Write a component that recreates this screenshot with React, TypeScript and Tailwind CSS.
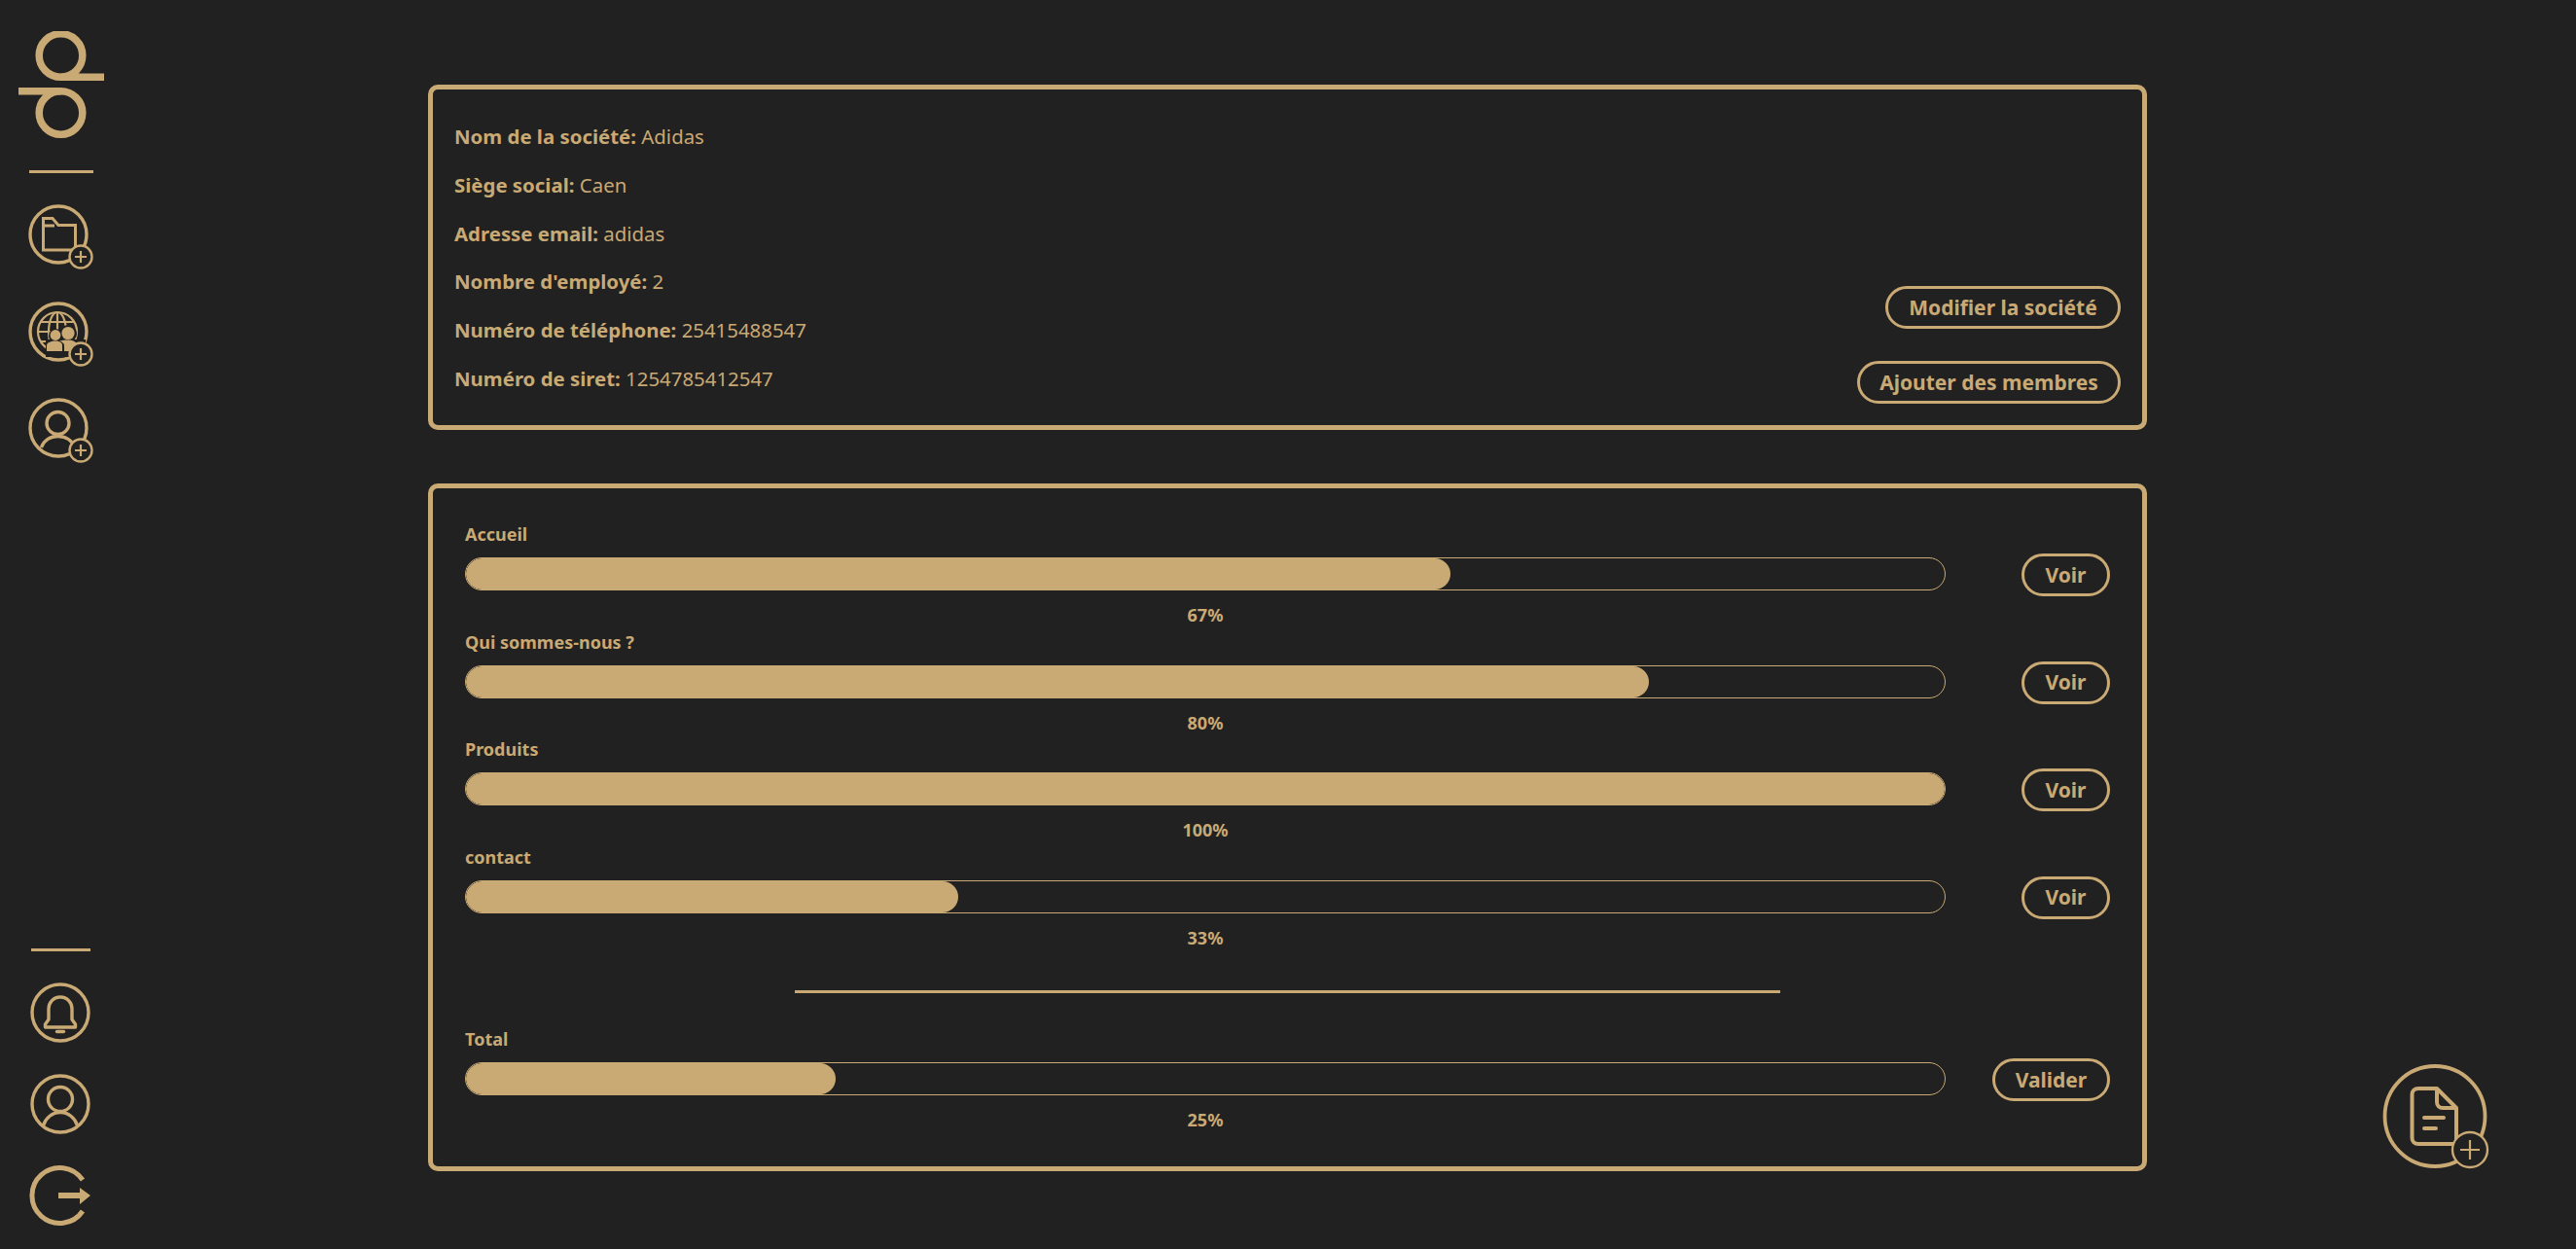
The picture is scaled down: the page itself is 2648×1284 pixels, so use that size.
const gold = '#c9a974'

function Badge({ cx = 55, cy = 55, r = 11.5, arm = 6 }: { cx?: number; cy?: number; r?: number; arm?: number }) {
  return (
    <g>
      <circle cx={cx} cy={cy} r={r} fill="#212121" stroke={gold} strokeWidth="2.4" />
      <path d={`M${cx - arm} ${cy}H${cx + arm}M${cx} ${cy - arm}V${cy + arm}`} stroke={gold} strokeWidth="2.2" />
    </g>
  )
}

function Logo() {
  return (
    <svg width="90" height="112" viewBox="0 0 90 112" fill="none" stroke={gold} strokeWidth="7.5">
      <circle cx="43.5" cy="25" r="22.3" />
      <path d="M43.5 47.3H88" />
      <circle cx="43.5" cy="84" r="22.3" />
      <path d="M0 61.7H43.5" />
    </svg>
  )
}

function FolderIcon() {
  return (
    <svg width="68" height="68" viewBox="0 0 68 68" fill="none" stroke={gold} strokeWidth="3">
      <circle cx="32" cy="32" r="29" strokeWidth="3.4" />
      <path d="M16.5 48V15.5H26L32 22.5H49.5V48Z" />
      <path d="M16.5 23H28" />
      <Badge />
    </svg>
  )
}

function GlobeIcon() {
  return (
    <svg width="68" height="68" viewBox="0 0 68 68" fill="none" stroke={gold} strokeWidth="2.2">
      <circle cx="32" cy="32" r="29" strokeWidth="3.4" />
      <circle cx="31" cy="32" r="20" />
      <ellipse cx="31" cy="32" rx="9" ry="20" />
      <path d="M31 12V52M13 22H49M11 32H51M13 42H49" />
      <g fill="#212121" stroke="none">
        <circle cx="29" cy="36" r="7" />
        <circle cx="42" cy="34" r="9" />
        <path d="M19 40H60V58H19Z" />
      </g>
      <g fill={gold} stroke="none">
        <circle cx="29" cy="35.5" r="5.4" />
        <circle cx="42" cy="33.5" r="6.6" />
        <path d="M20 52V46C20 43 25 41.5 29 41.5C33 41.5 36 43 36 46V52Z" />
        <path d="M33 41.5C35.5 41 38 40.5 42 40.5C47 40.5 50 42 51 45V52H38V46C38 44 36 42.5 33 41.5Z" />
      </g>
      <Badge />
    </svg>
  )
}

function UserPlusIcon() {
  return (
    <svg width="68" height="68" viewBox="0 0 68 68" fill="none" stroke={gold} strokeWidth="3.4">
      <circle cx="32" cy="32" r="29" />
      <circle cx="31.5" cy="27" r="11.5" />
      <path d="M14.5 52C17 44.5 24 40.5 31.5 40.5C39 40.5 46 44.5 49 52" />
      <Badge />
    </svg>
  )
}

function BellIcon() {
  return (
    <svg width="64" height="64" viewBox="0 0 64 64" fill="none" stroke={gold} strokeWidth="3.4">
      <circle cx="32" cy="32" r="29" />
      <path d="M32 16C25 16 20 21.5 20 28V39L16.5 44V47H47.5V44L44 39V28C44 21.5 39 16 32 16Z" strokeLinejoin="round" />
      <path d="M28.5 51.5H35.5" strokeLinecap="round" />
    </svg>
  )
}

function UserIcon() {
  return (
    <svg width="64" height="64" viewBox="0 0 64 64" fill="none" stroke={gold} strokeWidth="3.4">
      <circle cx="32" cy="32" r="29" />
      <circle cx="32" cy="27" r="12.5" />
      <path d="M14.5 54C17 46 24 40.5 32 40.5C40 40.5 47 46 49.5 54" />
    </svg>
  )
}

function LogoutIcon() {
  return (
    <svg width="64" height="64" viewBox="0 0 64 64" fill="none">
      <path d="M55 16A28.5 28.5 0 1 0 55 48" stroke={gold} strokeWidth="5" />
      <path d="M30 29H52V24L63 32L52 41V35H30Z" fill={gold} />
    </svg>
  )
}

function DocIcon() {
  return (
    <svg width="122" height="122" viewBox="0 0 122 122" fill="none" stroke={gold} strokeWidth="3.8" className="fixed right-[78px] bottom-[70px]">
      <circle cx="55" cy="55.5" r="51.5" />
      <path d="M38 27H57L77 47V84H38C34 84 31.5 81.5 31.5 78V33C31.5 29.5 34 27 38 27Z" strokeWidth="4" strokeLinejoin="round" />
      <path d="M57 27V41C57 44.5 59.5 47 63 47H77" strokeWidth="4" />
      <path d="M44 57H64M44 68H56" strokeWidth="4" strokeLinecap="round" />
      <Badge cx={91} cy={90} r={18} arm={10} />
    </svg>
  )
}

const infos = [
  ['Nom de la société:', 'Adidas'],
  ['Siège social:', 'Caen'],
  ['Adresse email:', 'adidas'],
  ["Nombre d'employé:", '2'],
  ['Numéro de téléphone:', '25415488547'],
  ['Numéro de siret:', '1254785412547'],
]

const pages = [
  { name: 'Accueil', value: 66.6, pct: '67%' },
  { name: 'Qui sommes-nous ?', value: 80, pct: '80%' },
  { name: 'Produits', value: 100, pct: '100%' },
  { name: 'contact', value: 33.3, pct: '33%' },
]

function Pill({ label, width }: { label: string; width: string }) {
  return (
    <button className={`${width} h-[44px] rounded-full border-[3px] border-[#c9a974] text-[21px] font-bold leading-none whitespace-nowrap`}>
      {label}
    </button>
  )
}

function ProgressRow({ name, value, pct, action, width }: { name: string; value: number; pct: string; action: string; width: string }) {
  return (
    <div className="h-[110.5px] flex">
      <div className="w-[1522px] shrink-0">
        <p className="h-[35px] text-[18px] font-bold leading-[23px]">{name}</p>
        <div className="h-[34px] rounded-full border border-[#c9a974] overflow-hidden">
          <div className="h-full rounded-full bg-[#c9a974]" style={{ width: `${value}%` }} />
        </div>
        <p className="mt-[12px] text-[18px] font-bold leading-[26px] text-center">{pct}</p>
      </div>
      <div className="flex-1 flex justify-end pt-[31px] self-start">
        <Pill label={action} width={width} />
      </div>
    </div>
  )
}

export default function App() {
  return (
    <div className="min-h-screen h-[1284px] bg-[#212121] flex text-[#c9a974] font-['Noto_Sans',sans-serif] overflow-hidden">
      <aside className="w-[124px] shrink-0 flex flex-col justify-between pb-[23px]">
        <div className="flex flex-col">
          <div className="pt-[32px] pl-[19px]">
            <Logo />
          </div>
          <div className="ml-[30px] mt-[31px] w-[66px] h-[3px] bg-[#c9a974]" />
          <div className="ml-[28px] mt-[31px] flex flex-col gap-[31.5px]">
            <FolderIcon />
            <GlobeIcon />
            <UserPlusIcon />
          </div>
        </div>
        <div className="flex flex-col">
          <div className="ml-[32px] mb-[31px] w-[61px] h-[3px] bg-[#c9a974]" />
          <div className="ml-[30px] flex flex-col gap-[30px]">
            <BellIcon />
            <UserIcon />
            <LogoutIcon />
          </div>
        </div>
      </aside>

      <main className="ml-[316px] w-[1767px] pt-[87px] flex flex-col gap-[55px]">
        <section className="h-[355px] rounded-[10px] border-[5.5px] border-[#c9a974] pl-[22px] pr-[22px] pt-[24px] flex justify-between">
          <div className="flex flex-col">
            {infos.map(([label, val]) => (
              <p key={label} className="h-[49.8px] text-[20.4px] leading-[49.8px]">
                <span className="font-bold">{label}</span> {val}
              </p>
            ))}
          </div>
          <div className="flex flex-col items-end justify-end gap-[33px] pb-[22px]">
            <Pill label="Modifier la société" width="w-[242px]" />
            <Pill label="Ajouter des membres" width="w-[271px]" />
          </div>
        </section>

        <section className="h-[707px] rounded-[10px] border-[5.5px] border-[#c9a974] pl-[33px] pr-[33px] pt-[36px]">
          {pages.map((p) => (
            <ProgressRow key={p.name} name={p.name} value={p.value} pct={p.pct} action="Voir" width="w-[91px]" />
          ))}
          <div className="ml-[338.5px] mt-[38px] mb-[36px] w-[1013px] h-[3px] bg-[#c9a974]" />
          <ProgressRow name="Total" value={25} pct="25%" action="Valider" width="w-[121px]" />
        </section>
      </main>

      <DocIcon />
    </div>
  )
}
